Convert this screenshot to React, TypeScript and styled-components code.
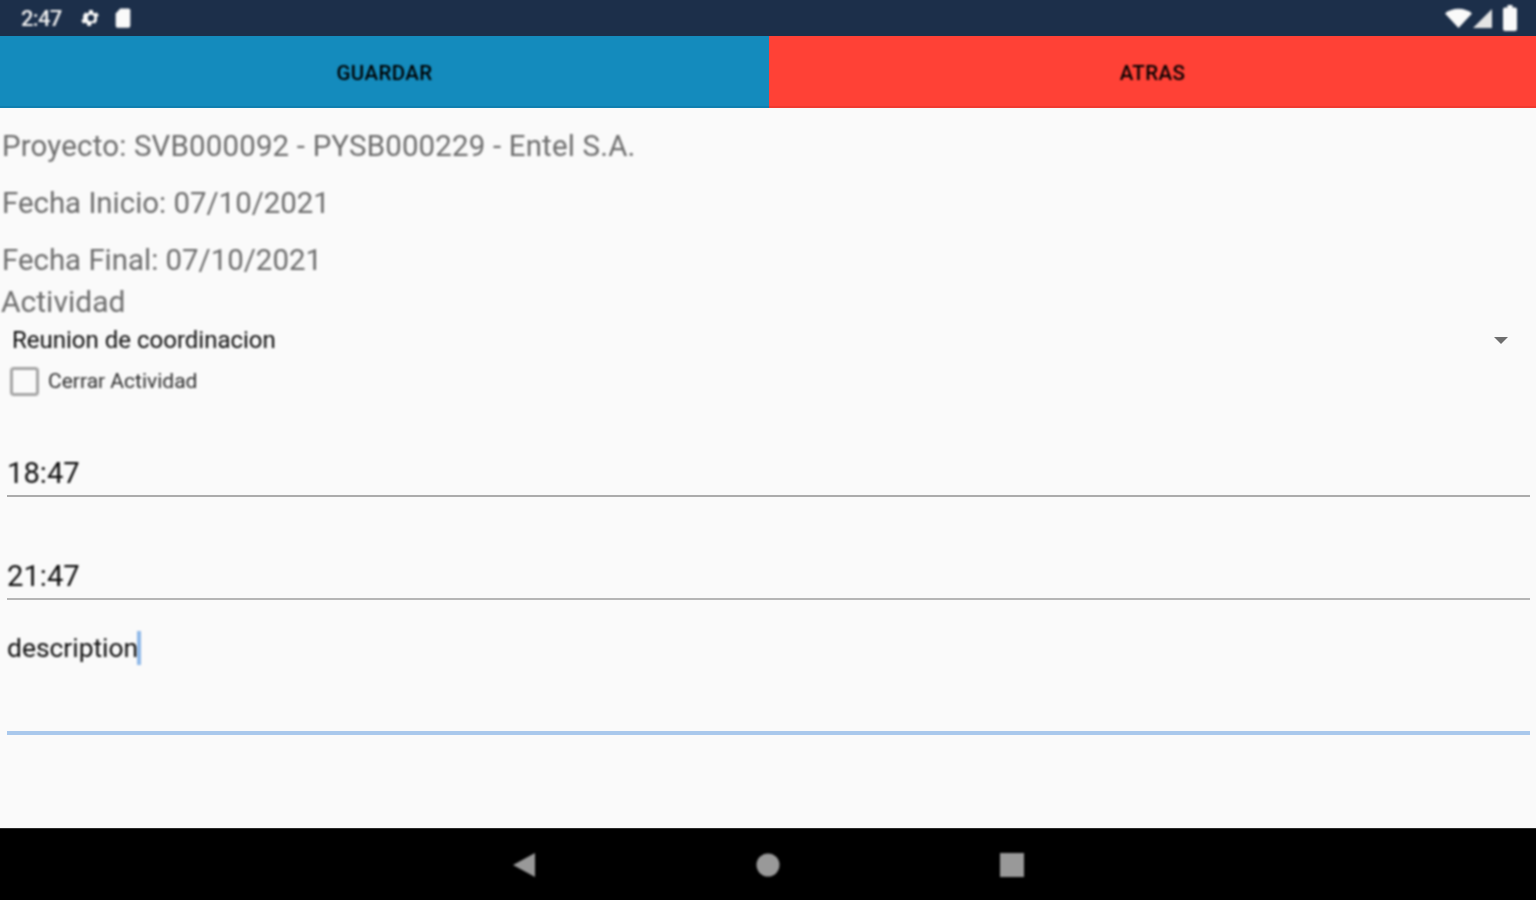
import React from "react";
import styled, { createGlobalStyle } from "styled-components";

const Global = createGlobalStyle`
  html, body { margin: 0; padding: 0; background: #fafafa; }
  body { font-family: Roboto, "Liberation Sans", sans-serif; }
  * { box-sizing: border-box; }
`;

const Screen = styled.div`
  width: 1536px;
  height: 900px;
  display: flex;
  flex-direction: column;
  overflow: hidden;
  background: #fafafa;
`;

const StatusBar = styled.div`
  height: 36px;
  flex: none;
  background: #1c2f4a;
  display: flex;
  align-items: center;
  justify-content: space-between;
  padding: 0 19px 0 21px;
  color: #f2f2f2;
`;

const StatusGroup = styled.div<{ $gap: number }>`
  display: flex;
  align-items: center;
  gap: ${(p) => p.$gap}px;
`;

const Clock = styled.span`
  font-size: 22px;
  font-weight: 500;
  letter-spacing: -0.7px;
  width: 49px;
  filter: blur(0.8px);
`;

const Icon = styled.svg`
  display: block;
  fill: #fafafa;
  filter: blur(0.8px);
`;

const BatteryIcon = styled(Icon)`
  margin-left: 10px;
`;

const ActionBar = styled.div`
  height: 72px;
  flex: none;
  display: flex;
`;

const ActionButton = styled.div<{ $bg: string; $edge: string; $width: number }>`
  width: ${(p) => p.$width}px;
  flex: none;
  display: flex;
  align-items: center;
  justify-content: center;
  background: ${(p) => p.$bg};
  border-bottom: 2px solid ${(p) => p.$edge};
  padding-top: 4px;
`;

const ActionLabel = styled.span`
  font-size: 20.5px;
  font-weight: 500;
  letter-spacing: 0.4px;
  color: #000;
  filter: blur(0.8px);
`;

const Content = styled.div`
  flex: 1;
  min-height: 0;
  display: flex;
  flex-direction: column;
  background: #fafafa;
`;

const InfoLine = styled.div<{ $tracking?: number }>`
  height: 57px;
  padding: 19px 0 0 2px;
  font-size: 29.4px;
  line-height: 38px;
  letter-spacing: ${(p) => p.$tracking ?? 0}px;
  color: #6c6c6c;
  white-space: nowrap;
  filter: blur(0.8px);
`;

const SectionLabel = styled.div`
  height: 38px;
  margin-top: 4px;
  padding-left: 1px;
  font-size: 30px;
  line-height: 38px;
  color: #6c6c6c;
  filter: blur(0.8px);
`;

const SelectRow = styled.div`
  height: 38px;
  flex: none;
  display: flex;
  align-items: center;
  justify-content: space-between;
  padding: 0 28px 0 12px;
  font-size: 24px;
  color: #0c0c0c;
`;

const SelectText = styled.span`
  filter: blur(0.8px);
`;

const Caret = styled.span`
  width: 0;
  height: 0;
  border-left: 7px solid transparent;
  border-right: 7px solid transparent;
  border-top: 7px solid #6e6e6e;
`;

const CheckRow = styled.div`
  height: 44px;
  flex: none;
  display: flex;
  align-items: center;
  gap: 9px;
  padding-left: 10px;
  font-size: 21px;
  color: #2c2c2c;
`;

const CheckBox = styled.span`
  width: 29px;
  height: 29px;
  border: 3px solid #a5a5a5;
  border-radius: 4px;
  filter: blur(0.8px);
`;

const CheckLabel = styled.span`
  filter: blur(0.8px);
`;

const Field = styled.div<{ $height: number; $line: string; $lineWidth: number }>`
  height: ${(p) => p.$height}px;
  flex: none;
  margin: 0 6px 0 7px;
  border-bottom: ${(p) => p.$lineWidth}px solid ${(p) => p.$line};
  font-size: 29.2px;
  color: #0c0c0c;
  display: flex;
  flex-direction: column;
`;

const FieldText = styled.div<{ $top: number }>`
  margin-top: ${(p) => p.$top}px;
  line-height: 38px;
  filter: blur(0.8px);
`;

const DescriptionText = styled(FieldText)`
  font-size: 26.4px;
  display: flex;
  align-items: center;
`;

const Cursor = styled.span`
  width: 4px;
  height: 34px;
  background: #8fb8e8;
  margin-left: -1px;
`;

const NavBar = styled.div`
  height: 72px;
  flex: none;
  background: #000;
  border-top: 1px solid #2a2a2a;
  display: flex;
  align-items: center;
  justify-content: center;
  gap: 220px;
`;

const NavIcon = styled.svg`
  display: block;
  width: 24px;
  height: 24px;
  fill: #999;
  filter: blur(0.8px);
`;

export default function App() {
  return (
    <Screen>
      <Global />
      <StatusBar>
        <StatusGroup $gap={10}>
          <Clock>2:47</Clock>
          <Icon width="22" height="22" viewBox="0 0 24 24">
            <path fillRule="evenodd" d="M19.4 13a7.5 7.5 0 0 0 0-2l2.1-1.6-2-3.5-2.5 1a7.4 7.4 0 0 0-1.7-1L15 3.2h-4l-.4 2.7a7.4 7.4 0 0 0-1.7 1l-2.5-1-2 3.5L4.500 11a7.5 7.5 0 0 0 0 2l-2.1 1.600 2 3.500 2.500-1a7.4 7.4 0 0 0 1.700 1l.4 2.700h4l.4-2.700a7.4 7.4 0 0 0 1.700-1l2.500 1 2-3.500zM13 15.500a3.500 3.500 0 1 1 0-7 3.500 3.500 0 0 1 0 7z" transform="translate(-1 0)" />
          </Icon>
          <Icon width="22" height="22" viewBox="0 0 24 24">
            <path d="M9 1.500h9a2 2 0 0 1 2 2v17a2 2 0 0 1-2 2H6a2 2 0 0 1-2-2V7z" />
          </Icon>
        </StatusGroup>
        <StatusGroup $gap={1}>
          <Icon width="27" height="22" viewBox="0 0 27 22">
            <path d="M0 6.500C3.800 3.300 8.300 1.800 13.500 1.800s9.700 1.500 13.500 4.700L13.500 21z" />
          </Icon>
          <Icon width="19" height="19" viewBox="0 0 19 19">
            <path d="M19 0v19H0z" fill="#e4e4e4" />
          </Icon>
          <BatteryIcon width="14" height="26" viewBox="0 0 14 26">
            <path d="M4.500 0h5v2.500h2.500a2 2 0 0 1 2 2V24a2 2 0 0 1-2 2H2a2 2 0 0 1-2-2V4.500a2 2 0 0 1 2-2h2.500z" />
          </BatteryIcon>
        </StatusGroup>
      </StatusBar>
      <ActionBar>
        <ActionButton $bg="#148bbd" $edge="#0f7fb0" $width={769}>
          <ActionLabel>GUARDAR</ActionLabel>
        </ActionButton>
        <ActionButton $bg="#ff4136" $edge="#f03a30" $width={767}>
          <ActionLabel>ATRAS</ActionLabel>
        </ActionButton>
      </ActionBar>
      <Content>
        <InfoLine $tracking={0.2}>Proyecto: SVB000092 - PYSB000229 - Entel S.A.</InfoLine>
        <InfoLine>Fecha Inicio: 07/10/2021</InfoLine>
        <InfoLine>Fecha Final: 07/10/2021</InfoLine>
        <SectionLabel>Actividad</SectionLabel>
        <SelectRow>
          <SelectText>Reunion de coordinacion</SelectText>
          <Caret />
        </SelectRow>
        <CheckRow>
          <CheckBox />
          <CheckLabel>Cerrar Actividad</CheckLabel>
        </CheckRow>
        <Field $height={94} $line="#ababab" $lineWidth={2}>
          <FieldText $top={51}>18:47</FieldText>
        </Field>
        <Field $height={103} $line="#b5b5b5" $lineWidth={2}>
          <FieldText $top={60}>21:47</FieldText>
        </Field>
        <Field $height={135} $line="#a9c8ec" $lineWidth={4}>
          <DescriptionText $top={29}>
            description
            <Cursor />
          </DescriptionText>
        </Field>
      </Content>
      <NavBar>
        <NavIcon viewBox="0 0 24 24">
          <path d="M23 0v24L1 12z" />
        </NavIcon>
        <NavIcon viewBox="0 0 24 24">
          <circle cx="12" cy="12" r="11.500" />
        </NavIcon>
        <NavIcon viewBox="0 0 24 24">
          <rect x="0" y="0" width="24" height="24" />
        </NavIcon>
      </NavBar>
    </Screen>
  );
}
